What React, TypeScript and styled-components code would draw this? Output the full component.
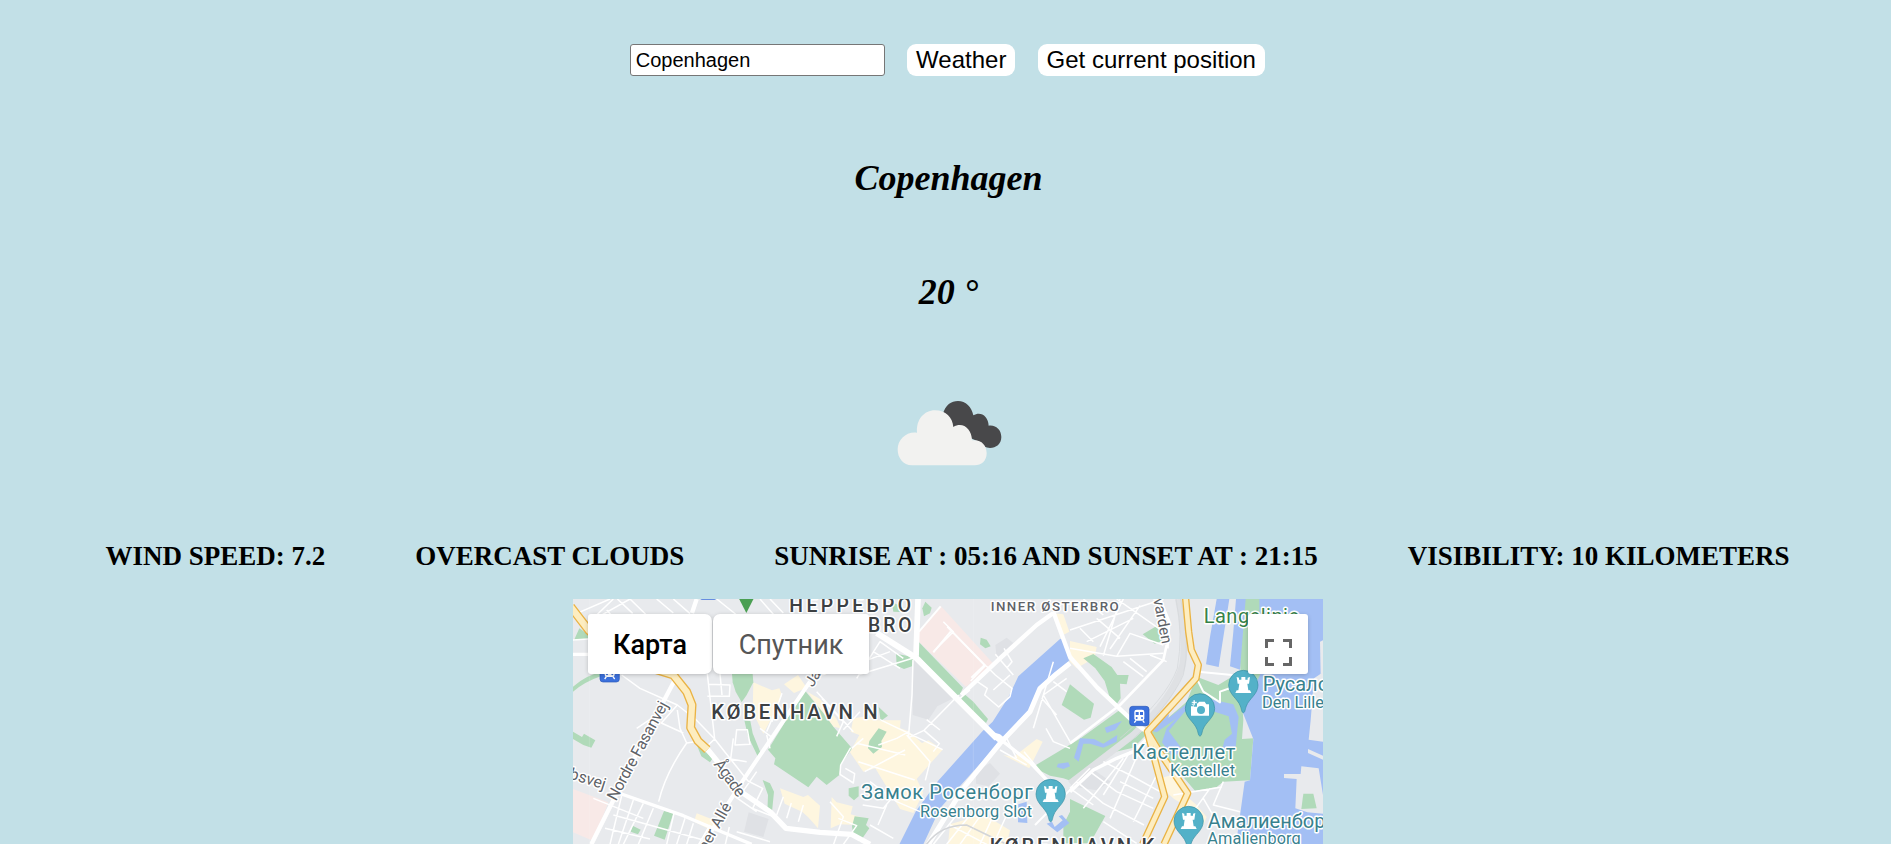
import React, { useState } from "react";
import styled, { createGlobalStyle } from "styled-components";

const GlobalStyle = createGlobalStyle`
  body {
    margin: 0;
    background: #c2e0e7;
    color: #000;
    font-family: "Liberation Serif", "Times New Roman", serif;
    overflow: hidden;
  }
`;

const Page = styled.main`
  box-sizing: border-box;
  height: 844px;
  padding: 44px 0 0 5px;
  display: flex;
  flex-direction: column;
  align-items: center;
  overflow: hidden;
`;

const SearchBar = styled.form`
  display: flex;
  gap: 22.5px;
  height: 32px;
  margin-right: 1.5px;
`;

const CityInput = styled.input`
  box-sizing: border-box;
  width: 255px;
  height: 32px;
  padding: 1px 5px;
  border: 1px solid #767676;
  border-radius: 3px;
  background: #fff;
  color: #000;
  font: 20px "Liberation Sans", Arial, sans-serif;
  outline: none;
`;

const ActionButton = styled.button<{ $width: number }>`
  width: ${(p) => p.$width}px;
  height: 32px;
  padding: 0;
  border: 0;
  border-radius: 9px;
  background: #fff;
  color: #000;
  font: 24px/32px "Liberation Sans", Arial, sans-serif;
  white-space: nowrap;
`;

const Reading = styled.h2<{ $top: number }>`
  margin: ${(p) => p.$top}px 0 0 1px;
  font-size: 36px;
  line-height: 42px;
  font-style: italic;
  font-weight: bold;
`;

const CloudIcon = styled.svg`
  display: block;
  width: 106px;
  height: 66px;
  margin: 87px 0 0 3px;
`;

const Stats = styled.div`
  display: flex;
  gap: 90px;
  margin: 75px 1px 0 0;
  font-size: 27px;
  line-height: 30px;
  font-weight: bold;
  text-transform: uppercase;
  white-space: nowrap;
`;

const MapFrame = styled.section`
  position: relative;
  width: 750px;
  height: 245px;
  margin-top: 28px;
  overflow: hidden;
  background: #e8eaed;
  flex: none;
`;

const MapCanvas = styled.svg`
  display: block;
  width: 750px;
  height: 245px;
  font-family: Roboto, sans-serif;
`;

const MapTypes = styled.div`
  position: absolute;
  top: 15px;
  left: 15px;
  display: flex;
  gap: 1px;
`;

const MapTypeButton = styled.button<{ $active: boolean; $width: number }>`
  width: ${(p) => p.$width}px;
  height: 60px;
  padding: 2px 0 0;
  border: 0;
  border-radius: ${(p) => (p.$active ? "3px 7px 7px 3px" : "7px 3px 3px 7px")};
  background: #fff;
  color: ${(p) => (p.$active ? "#000" : "#565656")};
  font: ${(p) => (p.$active ? 500 : 400)} 27px Roboto, sans-serif;
  box-shadow: 0 1px 5px -1px rgba(0, 0, 0, 0.3);
`;

const FullscreenButton = styled.button`
  position: absolute;
  top: 15px;
  right: 15px;
  width: 60px;
  height: 60px;
  padding: 16px 0 0;
  border: 0;
  border-radius: 3px;
  background: #fff;
  box-shadow: 0 1px 5px -1px rgba(0, 0, 0, 0.3);
  display: grid;
  place-items: center;
`;

const parks = [
  "M12 136L28 100L54 118V132Z",
  "M9 275Q50 240 92 232V244Q45 260 9 290Z",
  "M9 410L36 426L42 416L76 436L64 458L40 450L9 432Z",
  "M486 237H548L550 262L530 300L515 322L497 290L488 262Z",
  "M523 376L541 378L548 415L572 474L563 484L534 424Z",
  "M378 444L400 466L428 490L420 502L394 484Z",
  "M578 555L600 565L612 590L606 650L592 652L594 600Z",
  "M282 648L310 655L284 734L252 722Z",
  "M188 692L212 704L204 718L182 710Z",
  "M704 286L760 354L790 395L846 460L812 510L808 540L770 570L740 545L715 577L612 508L616 490L594 464Z",
  "M978 176L1030 186L1026 214L1002 222L980 212Z",
  "M965 20L1000 38L1005 52L970 50Z",
  "M1066 20L1085 38L1080 55L1062 64L1057 40Z",
  "M1047 142L1179 278L1170 298L1158 304L1047 184Z",
  "M1182 296L1210 320L1254 372L1248 384L1170 318Z",
  "M1232 128L1250 134L1262 154L1246 160L1230 148Z",
  "M926 400L950 410L934 438L936 456L910 476L894 460L898 438Z",
  "M926 336L954 362L932 378Z",
  "M836 580L866 574L866 604L852 616L836 602Z",
  "M854 664L896 670L888 690L898 700L870 740L850 722L846 694Z",
  "M1388 516L1532 430L1645 348L1690 366L1734 414L1690 458L1630 472L1560 510L1510 560L1480 550L1440 542Z",
  "M1475 330L1500 268L1572 326L1562 368L1542 374Z",
  "M1540 190L1570 177L1625 216L1642 240L1676 240L1670 268L1650 266L1652 310L1640 328L1618 304L1604 258L1576 220Z",
  "M1718 118L1765 90L1778 138L1754 146Z",
  "M2025 12H2070V250L2014 280L2010 200Z",
  "M1745 412L1850 320L1880 245L1945 270L2010 230L2020 375L2016 432L2050 430L2040 556L1960 560L1940 576L1875 587L1800 500Z",
  "M1500 612L1606 663L1560 745H1480V690L1500 650Z",
];
const blocks = [
  "M642 268L684 240L710 278L672 294Z",
  "M550 262L606 286L628 280L636 300L618 344L580 416L548 350Z",
  "M712 290L750 312L800 372L812 400L790 395Z",
  "M850 370L890 364L910 376L992 376L990 400L1015 408L1056 444L1075 436L1118 464L1040 552L1060 594L1030 654L990 642L916 520L880 530L840 472L868 420L842 410Z",
  "M785 606L800 622L848 634L842 658L878 668L862 690L810 688L782 700Z",
  "M630 580L700 606L714 600L750 632L744 700L714 666L696 650L644 626Z",
  "M380 655L432 675L450 704L412 700L372 680Z",
  "M1450 55L1480 58L1498 110L1480 120Z",
  "M1500 138L1580 156L1574 188L1520 220L1500 200Z",
  "M1300 480L1330 486L1400 432L1418 440L1378 520Z",
  "M1140 688L1240 658L1320 706L1310 748H1134Z",
  "M1770 550L1806 540L1834 590L1880 630L1910 666L1900 690L1860 640L1812 612L1770 574Z",
];
const grayBlocks = [
  "M1027 190L1158 306L1102 334L1075 374L1028 360Z",
  "M1276 150L1310 128L1330 144L1280 190Z",
  "M1218 530L1260 504L1290 536L1256 574L1218 566Z",
  "M536 652L596 672L580 726L522 710Z",
  "M1500 574L1560 516L1622 560L1580 586Z",
];
const waters = [
  "M1470 132L1482 130L1497 198L1410 272L1380 344L1302 430L1272 460L1110 640L1060 748H988L1038 648L1104 558L1238 408L1268 380L1316 305L1345 244Z",
  "M1940 12H1978L1946 216L1908 208L1920 126Z",
  "M1998 12H2027L2010 224L1980 214L1990 110Z",
  "M2068 12H2259V748H1998L2024 560L2040 556L2050 432L2018 352L2070 240Z",
  "M1736 404L1798 356L1795 370L1850 326L1890 306L1990 328L2006 366L1996 466H1956L1964 434L1986 416L1976 364L1900 340L1844 350L1796 408L1836 462L1810 490L1776 442L1790 400L1820 370L1760 412Z",
  "M1530 430L1572 432L1600 446L1642 420L1640 440L1600 458L1560 446L1540 446L1526 500L1512 488Z",
  "M1604 398L1656 378L1636 404L1610 414Z",
  "M1464 506L1495 502L1500 514L1480 522L1460 516Z",
  "M1430 686L1446 680L1454 696L1478 676L1466 664L1476 660L1498 684L1462 712Z",
  "M1345 628L1370 620L1372 684L1344 682Z",
];
const piers = [
  "M2250 140L2259 136V232L2252 240Z",
  "M2232 250L2259 232V440L2216 434L2222 376Z",
  "M2142 537H2192L2194 514L2246 520L2259 600V656L2212 652L2176 640L2180 552L2142 549Z",
  "M2214 462L2259 482V494L2214 474Z",
];
const minorRoads =
  "M9 60L120 12M60 80L180 12M110 45L150 90M142 12L188 55M180 12L260 90M260 12L310 54M310 12L360 56M80 60L130 12M440 12L500 60M600 12L640 54M570 12L610 58M9 135L54 132M155 240L210 280L322 330L376 372M322 330L274 384L340 414M322 345L330 400L350 444L376 440M350 444Q286 535 266 620M376 372L434 432L404 460M434 432L464 470L534 558M412 237L434 432M450 237L456 300M415 268L480 270L478 304H412M500 404L532 404L540 448L495 450ZM490 430L482 492L530 500M200 400L290 340M70 610L220 670M155 602L120 748M190 615L145 748M220 625L160 748M250 640L205 748M312 655L290 748M345 670L320 748M370 685L350 748M105 700L240 732M130 660L400 735M420 690L386 748M478 696L466 748M500 710L600 740M534 558L578 580L548 640L610 665M495 605L560 650M510 602L560 530M620 660L640 605M650 670L664 624M685 680L700 630M590 420L600 460M570 400L610 430M618 344L590 410M636 295L606 380M740 290L850 410M755 310L820 380L800 424M820 404L870 350M845 460L880 430M842 458L812 510L810 538L850 564L854 536L826 520M860 445L1006 480M930 374L1118 464M925 450L980 430L1016 410M865 500L1034 555M884 530L1005 465M900 560L980 620L1050 650M990 580L940 640L878 630M780 620L820 665L790 750M805 670L860 692L820 748M900 690L970 730M950 630L924 690M1015 430L1026 300L1029 194M1016 428L1062 406L1166 300M1062 406L1108 446L1090 470M1070 374L1110 405M1010 420L1080 500L1066 556M860 250L930 140L1000 190M880 200L960 170M910 170L990 220M870 238L1028 190M1090 170L1150 110L1120 80M1132 95L1246 212L1202 258M1248 212L1276 240L1326 280L1320 305L1286 336L1244 300L1252 280L1222 260M1276 178L1330 240M1302 160L1326 200L1310 220M1320 240L1270 285M1200 285L1170 310M1540 12L1600 60M1500 105L1780 12M1550 140L1690 70M1590 155L1660 12M1620 162L1710 32M1640 12L1780 110M1530 100L1570 140M1580 70L1650 130M1500 160L1640 184L1780 175M1640 184L1680 115L1780 150M1600 182L1650 12M1740 180L1790 200M1680 190L1730 230M1660 200L1720 245M1450 200L1390 400M1490 250L1420 300L1500 440M1450 260L1490 290M1415 310L1460 360M1428 400L1450 440L1500 460M1362 470L1420 540M1310 430L1340 490M1290 465L1370 510M1600 500L1680 540L1770 590M1560 530L1640 590L1750 640M1520 560L1600 625L1722 690M1680 470L1600 600M1720 440L1620 670M1760 540L1690 680M1660 490L1540 640M1500 580L1560 520M1650 560L1750 610M1570 630L1500 580M1600 680L1700 745M1810 600L1956 576M1900 610L1940 680M1870 650L1920 580M1960 560L1930 630L2010 650M1140 690L1250 748M1160 660L1090 748M1200 660L1130 748M1240 650L1170 748M1280 640L1230 748M1310 660L1270 748";

interface MapLabelProps {
  x: number;
  y: number;
  size: number;
  len?: number;
  color?: string;
  weight?: number;
  angle?: number;
  anchor?: "start" | "end";
  children: string;
}

const MapLabel = ({ x, y, size, len, color = "#5f6368", weight = 400, angle = 0, anchor = "start", children }: MapLabelProps) => (
  <text
    x={x}
    y={y}
    fontSize={size}
    textLength={len}
    fill={color}
    fontWeight={weight}
    textAnchor={anchor}
    transform={angle ? `rotate(${angle} ${x} ${y})` : undefined}
    stroke="#fff"
    strokeWidth={9}
    strokeLinejoin="round"
    paintOrder="stroke"
  >
    {children}
  </text>
);

const Pin = ({ x, y, camera = false }: { x: number; y: number; camera?: boolean }) => (
  <g transform={`translate(${x} ${y})`}>
    <path
      d="M0 83C-5 83 -5 74 -9 63C-17 41 -44 28 -44 0A44 44 0 0 1 44 0C44 28 17 41 9 63C5 74 5 83 0 83Z"
      fill="#53b1c8"
      stroke="#3a8fa3"
      strokeWidth={2}
    />
    {camera ? (
      <g fill="#fff">
        <path d="M-26 -12H-18V-5H-9V-14L-2 -20H14L19 -12H27V22H-27V-6H-18Z" />
        <path d="M-25 -20H-20V-25H-15V-20H-9V-15H-15V-9H-20V-15H-25Z" stroke="#53b1c8" strokeWidth={1} />
        <circle cx={3} cy={5} r={12} fill="#53b1c8" />
      </g>
    ) : (
      <path
        fill="#fff"
        d="M-20 -24L-13 -22V-16H-6V-24H6V-16H13V-22L20 -24L17 -4H12L15 16H20L24 24H-24L-20 16H-15L-12 -4H-17Z"
      />
    )}
  </g>
);

const Station = ({ x, y }: { x: number; y: number }) => (
  <g transform={`translate(${x} ${y})`}>
    <rect width={58} height={58} rx={9} fill="#3b70dc" stroke="#2b57b8" strokeWidth={2} />
    <rect x={14} y={10} width={30} height={33} rx={7} fill="#fff" />
    <path d="M18 17H27V26H18ZM31 17H40V26H31Z" fill="#3b70dc" />
    <circle cx={21} cy={35} r={3} fill="#3b70dc" />
    <circle cx={37} cy={35} r={3} fill="#3b70dc" />
    <path d="M19 42L14 49M39 42L44 49" stroke="#fff" strokeWidth={4} />
  </g>
);

const TEAL = "#38818e";

const CityMap = () => (
  <MapCanvas viewBox="9 12 2250 735" aria-label="Copenhagen map">
    <rect x={9} y={12} width={2250} height={735} fill="#e8eaed" />
    <g fill="#dfe1e5">{grayBlocks.map((d) => <path key={d} d={d} />)}</g>
    <path d="M1112 32L1268 204L1188 276L1047 140V110Z M9 582L115 622L70 738L9 712Z" fill="#f8e9e7" />
    <g fill="#fef6df">{blocks.map((d) => <path key={d} d={d} />)}</g>
    <g fill="#b0dab9">{parks.map((d) => <path key={d} d={d} />)}</g>
    <g fill="#a3bff4">{waters.map((d) => <path key={d} d={d} />)}</g>
    <g fill="#e8eaed">{piers.map((d) => <path key={d} d={d} />)}</g>
    <path d="M2200 596H2230L2240 640L2194 642Z" fill="#b0dab9" />

    <g fill="none" stroke="#dfe1e4">
      <path d="M1825 12Q1850 130 1838 210Q1810 310 1690 420L1500 565" strokeWidth={20} />
      <path d="M1818 12Q1840 120 1822 220Q1790 310 1650 430" stroke="#d3d6d9" strokeWidth={2} />
      <path d="M1832 12Q1862 150 1840 240Q1800 330 1680 440" stroke="#d3d6d9" strokeWidth={2} />
    </g>
    <path d={minorRoads} fill="none" stroke="#fff" strokeWidth={4.5} strokeLinejoin="round" />
    <path d="M1047 110L1112 34M1132 95L1244 210L1204 248M1090 172L1142 110" fill="none" stroke="#fff" strokeWidth={6} />

    <g fill="none" stroke="#fff" strokeWidth={13} strokeLinejoin="round">
      <path d="M380 12L366 54M318 248L238 400L64 748" />
      <path d="M9 178H54M120 585L340 662L478 720L545 748" strokeWidth={10} />
      <path d="M412 462L520 595L600 650L648 700L750 712L845 718L900 748" strokeWidth={16} />
      <path d="M720 260L515 562L478 620L400 748" strokeWidth={12} />
      <path d="M1044 12L1038 182" strokeWidth={17} />
      <path d="M920 114L1040 190L1280 430" strokeWidth={18} />
      <path d="M1174 300L1290 190L1400 90L1450 54" strokeWidth={13} />
      <path d="M1500 205L1460 236L1410 280L1380 350L1290 445L1178 582L1075 748" strokeWidth={15} />
      <path d="M1272 420L1300 440L1382 504L1435 560" strokeWidth={10} />
      <path d="M1450 50L1500 186L1582 278L1690 380L1732 412" strokeWidth={13} />
      <path d="M1500 590L1570 525L1640 490L1690 470L1732 430" strokeWidth={10} />
      <path d="M1790 150L1780 195L1650 330L1500 445" strokeWidth={8} />
      <path d="M1770 12L1798 80L1792 160" strokeWidth={8} />
      <path d="M1395 690L1510 575M1885 230L2010 242M1880 250L1900 290L1950 322V290L1990 276" strokeWidth={6} />
    </g>
    <path d="M1257 408L1272 432L1292 448L1310 434L1290 418Z" fill="#fff" />
    <path d="M1070 748Q1110 690 1190 690L1310 748" fill="none" stroke="#d3d5d8" strokeWidth={5} />

    {[
      { stroke: "#eab344", width: [27, 22] },
      { stroke: "#fdedc0", width: [19, 14] },
    ].map(({ stroke, width }) => (
      <g key={stroke} fill="none" stroke={stroke} strokeLinejoin="round">
        <path d="M2 35L58 108L150 190L310 240L350 290L366 330L362 398L384 438L412 464" strokeWidth={width[0]} />
        <path d="M1846 0L1856 110L1864 165L1885 210L1878 250L1810 325L1732 410L1784 605L1718 748" strokeWidth={width[1]} />
        <path d="M1732 410L1768 470L1853 595L1782 748" strokeWidth={width[1]} />
      </g>
    ))}
    <path d="M58 12V748M1210 12V748" stroke="#fff" strokeOpacity={0.22} strokeWidth={2} />

    <path d="M504 5H554L529 54Z" fill="#4a9f52" />
    <rect x={390} y={-40} width={49} height={54} rx={6} fill="#3b70dc" />
    <Station x={90} y={203} />
    <Station x={1679} y={334} />
    <Pin x={1442} y={597} />
    <Pin x={2020} y={270} />
    <Pin x={1890} y={340} camera />
    <Pin x={1856} y={678} />

    <MapLabel x={658} y={50} size={58} len={365} color="#3c4043" weight={500}>НЕРРЕБРО</MapLabel>
    <MapLabel x={894} y={111} size={58} len={131} color="#3c4043" weight={500}>BRO</MapLabel>
    <MapLabel x={424} y={372} size={61} len={499} color="#3c4043" weight={500}>KØBENHAVN N</MapLabel>
    <MapLabel x={1259} y={774} size={61} len={494} color="#3c4043" weight={500}>KØBENHAVN K</MapLabel>
    <MapLabel x={1262} y={48} size={40} len={384} weight={500}>INNER ØSTERBRO</MapLabel>
    <MapLabel x={873} y={613} size={60} len={515} color={TEAL}>Замок Росенборг</MapLabel>
    <MapLabel x={1050} y={667} size={49} len={336} color={TEAL}>Rosenborg Slot</MapLabel>
    <MapLabel x={1687} y={491} size={60} len={309} color={TEAL}>Кастеллет</MapLabel>
    <MapLabel x={1800} y={543} size={49} len={195} color={TEAL}>Kastellet</MapLabel>
    <MapLabel x={2078} y={288} size={60} color={TEAL}>Русалочка</MapLabel>
    <MapLabel x={2076} y={340} size={49} color={TEAL}>Den Lille Havfrue</MapLabel>
    <MapLabel x={1913} y={698} size={60} color={TEAL}>Амалиенборг</MapLabel>
    <MapLabel x={1912} y={746} size={49} len={280} color={TEAL}>Amalienborg</MapLabel>
    <MapLabel x={1901} y={84} size={60} len={286} color="#368248">Langelinie</MapLabel>
    <MapLabel x={1776} y={148} size={46} angle={79} anchor="end">Østbanevarden</MapLabel>
    <MapLabel x={138} y={620} size={48} len={330} angle={-61.5}>Nordre Fasanvej</MapLabel>
    <MapLabel x={430} y={508} size={48} len={125} angle={54}>Ågade</MapLabel>
    <MapLabel x={102} y={584} size={48} angle={18} anchor="end">Godthåbsvej</MapLabel>
    <MapLabel x={728} y={278} size={45} angle={-58}>Jagtvej</MapLabel>
    <MapLabel x={486} y={634} size={47} angle={-61} anchor="end">Falkoner Allé</MapLabel>
  </MapCanvas>
);

const OvercastIcon = () => (
  <CloudIcon viewBox="169 418 318 198" aria-label="overcast clouds">
    <path
      d="M306 462C314 432 332 421 352 421C375 421 393 438 398 464C419 451 443 465 444 495C467 492 482 509 482 529C482 550 466 562 448 562C435 562 425 556 418 545L340 510Z"
      fill="#48484a"
    />
    <path
      d="M214 614C187 614 171 592 171 566C171 536 197 512 229 516C226 477 250 449 283 449C315 449 336 470 338 499C365 482 393 503 394 539C420 535 438 552 438 578C438 601 422 614 402 614Z"
      fill="#f2f2f0"
    />
  </CloudIcon>
);

export default function App() {
  const [city, setCity] = useState("Copenhagen");

  return (
    <>
      <GlobalStyle />
      <Page>
        <SearchBar onSubmit={(e: React.FormEvent) => e.preventDefault()}>
          <CityInput value={city} onChange={(e) => setCity(e.target.value)} />
          <ActionButton $width={108}>Weather</ActionButton>
          <ActionButton $width={227} type="button">Get current position</ActionButton>
        </SearchBar>
        <Reading $top={81}>Copenhagen</Reading>
        <Reading $top={72}>20 °</Reading>
        <OvercastIcon />
        <Stats>
          <span>Wind speed: 7.2</span>
          <span>overcast clouds</span>
          <span>Sunrise at : 05:16 and Sunset at : 21:15</span>
          <span>Visibility: 10 kilometers</span>
        </Stats>
        <MapFrame>
          <CityMap />
          <MapTypes>
            <MapTypeButton $active $width={124}>Карта</MapTypeButton>
            <MapTypeButton $active={false} $width={156}>Спутник</MapTypeButton>
          </MapTypes>
          <FullscreenButton aria-label="Fullscreen">
            <svg width="27" height="27" viewBox="0 0 18 18" fill="#666">
              <path d="M0 0V6H2V2H6V0ZM12 0V2H16V6H18V0ZM16 16H12V18H18V12H16ZM2 12H0V18H6V16H2Z" />
            </svg>
          </FullscreenButton>
        </MapFrame>
      </Page>
    </>
  );
}
